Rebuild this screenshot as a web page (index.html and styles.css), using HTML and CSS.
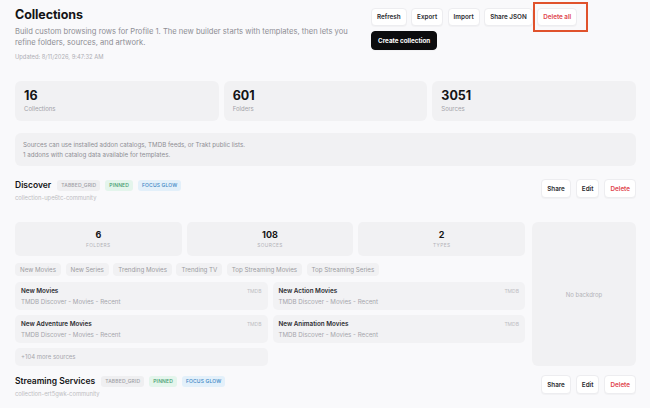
FILE: index.html
```html
<!DOCTYPE html>
<html lang="en">
<head>
<meta charset="utf-8">
<title>Collections</title>
<link rel="stylesheet" href="styles.css">
</head>
<body>
<main class="page">
  <header class="top">
    <div class="intro">
      <h1>Collections</h1>
      <p class="lede">Build custom browsing rows for Profile 1. The new builder starts with templates, then lets you refine folders, sources, and artwork.</p>
      <p class="stamp">Updated: 8/11/2026, 9:47:32 AM</p>
    </div>
    <div class="actions">
      <button class="btn">Refresh</button>
      <button class="btn">Export</button>
      <button class="btn">Import</button>
      <button class="btn">Share JSON</button>
      <span class="flag"><button class="btn danger">Delete all</button></span>
      <button class="btn primary">Create collection</button>
    </div>
  </header>

  <section class="totals">
    <div class="total"><strong>16</strong><span>Collections</span></div>
    <div class="total"><strong>601</strong><span>Folders</span></div>
    <div class="total"><strong>3051</strong><span>Sources</span></div>
  </section>

  <div class="note">
    <p>Sources can use installed addon catalogs, TMDB feeds, or Trakt public lists.</p>
    <p>1 addons with catalog data available for templates.</p>
  </div>

  <article class="coll">
    <div class="coll-head">
      <div>
        <div class="coll-title">
          <h2>Discover</h2>
          <span class="tag">TABBED_GRID</span>
          <span class="tag green">PINNED</span>
          <span class="tag blue">FOCUS GLOW</span>
        </div>
        <div class="slug">collection-upe6tc-community</div>
      </div>
      <div class="row-actions">
        <button class="btn sm">Share</button>
        <button class="btn sm">Edit</button>
        <button class="btn sm danger">Delete</button>
      </div>
    </div>

    <div class="coll-body">
      <div class="coll-main">
        <div class="counts">
          <div class="count"><b>6</b><span>Folders</span></div>
          <div class="count"><b>108</b><span>Sources</span></div>
          <div class="count"><b>2</b><span>Types</span></div>
        </div>
        <div class="chips">
          <span class="chip">New Movies</span>
          <span class="chip">New Series</span>
          <span class="chip">Trending Movies</span>
          <span class="chip">Trending TV</span>
          <span class="chip">Top Streaming Movies</span>
          <span class="chip">Top Streaming Series</span>
        </div>
        <div class="sources">
          <div class="src">
            <div class="src-top"><b>New Movies</b><i>TMDB</i></div>
            <div class="src-sub">TMDB Discover - Movies - Recent</div>
          </div>
          <div class="src">
            <div class="src-top"><b>New Action Movies</b><i>TMDB</i></div>
            <div class="src-sub">TMDB Discover - Movies - Recent</div>
          </div>
          <div class="src">
            <div class="src-top"><b>New Adventure Movies</b><i>TMDB</i></div>
            <div class="src-sub">TMDB Discover - Movies - Recent</div>
          </div>
          <div class="src">
            <div class="src-top"><b>New Animation Movies</b><i>TMDB</i></div>
            <div class="src-sub">TMDB Discover - Movies - Recent</div>
          </div>
          <div class="more">+104 more sources</div>
        </div>
      </div>
      <div class="backdrop">No backdrop</div>
    </div>
  </article>

  <article class="coll">
    <div class="coll-head">
      <div>
        <div class="coll-title">
          <h2>Streaming Services</h2>
          <span class="tag">TABBED_GRID</span>
          <span class="tag green">PINNED</span>
          <span class="tag blue">FOCUS GLOW</span>
        </div>
        <div class="slug">collection-ert5gwk-community</div>
      </div>
      <div class="row-actions">
        <button class="btn sm">Share</button>
        <button class="btn sm">Edit</button>
        <button class="btn sm danger">Delete</button>
      </div>
    </div>
  </article>
</main>
</body>
</html>
```

FILE: styles.css
```css
* { box-sizing: border-box; }

html, body {
  margin: 0;
  background: #f9f9fb;
  font-family: Inter, "Noto Sans", sans-serif;
  color: #141416;
  overflow: hidden;
}

.page {
  padding: 8px 14px 0 15px;
}

p { margin: 0; }

/* ---------- page header ---------- */
.top {
  display: flex;
  justify-content: space-between;
  align-items: flex-start;
}

.intro h1 {
  margin: 0;
  font-size: 12.5px;
  line-height: 14px;
  font-weight: 700;
  letter-spacing: -0.1px;
}

.lede {
  margin-top: 4px;
  width: 340px;
  font-size: 7.6px;
  line-height: 11px;
  color: #8e8e94;
}

.stamp {
  margin-top: 5px;
  font-size: 5.8px;
  line-height: 8px;
  color: #aeaeb4;
}

.actions {
  width: 265px;
  display: flex;
  flex-wrap: wrap;
  gap: 5px 4.5px;
}

.btn {
  font-family: inherit;
  height: 18px;
  padding: 0 5px;
  border: 1px solid #ededf0;
  border-radius: 4px;
  background: #fff;
  font-size: 6.3px;
  font-weight: 600;
  color: #2b2b30;
  box-shadow: 0 1px 1px rgba(0, 0, 0, 0.03);
  cursor: pointer;
}

.btn.danger { color: #e0444c; }

.btn.primary {
  height: 19px;
  padding: 0 6px;
  background: #0c0c0e;
  border-color: #0c0c0e;
  color: #fff;
  font-weight: 700;
  border-radius: 4px;
}

.flag {
  position: relative;
  display: inline-flex;
}

/* highlight frame around the destructive action */
.flag::after {
  content: "";
  position: absolute;
  left: -4px;
  right: -11px;
  top: -6px;
  bottom: -6px;
  border: 2.5px solid #e0522c;
  pointer-events: none;
}

/* ---------- totals ---------- */
.totals {
  margin-top: 20px;
  display: grid;
  grid-template-columns: repeat(3, 1fr);
  gap: 5px;
}

.total {
  height: 40px;
  padding: 8px 9px 0;
  background: #f1f1f3;
  border-radius: 6px;
}

.total strong {
  display: block;
  font-size: 12.5px;
  line-height: 14px;
  font-weight: 700;
}

.total span {
  display: block;
  margin-top: 2px;
  font-size: 6px;
  line-height: 8px;
  color: #a2a2a8;
}

.note {
  margin-top: 12px;
  height: 33px;
  padding: 7px 8px;
  background: #f1f1f3;
  border-radius: 6px;
  font-size: 6.2px;
  line-height: 10px;
  color: #8e8e94;
}

/* ---------- collection ---------- */
.coll { margin-top: 13px; }
.coll + .coll { margin-top: 9px; }

.coll-head {
  display: flex;
  justify-content: space-between;
  align-items: flex-start;
}

.coll-title {
  display: flex;
  align-items: center;
  gap: 5px;
  margin-top: 1px;
}

.coll-title h2 {
  margin: 0 1px 0 0;
  font-size: 8.5px;
  line-height: 11px;
  font-weight: 600;
}

.tag {
  height: 11px;
  padding: 0 4px;
  line-height: 11px;
  border-radius: 3px;
  font-size: 5px;
  font-weight: 500;
  letter-spacing: 0.15px;
  background: #efeff1;
  color: #a0a0a6;
}

.tag.green { background: #e4f5ec; color: #3c9a6b; }
.tag.blue { background: #e3f0fa; color: #3d86c4; }

.slug {
  margin-top: 3px;
  font-size: 5.8px;
  line-height: 8px;
  color: #bdbdc2;
}

.row-actions {
  display: flex;
  gap: 5px;
}

.btn.sm {
  height: 19px;
  padding: 0 5px;
}

.coll-body {
  margin-top: 20px;
  display: flex;
  gap: 7px;
}

.coll-main { flex: 1; }

.counts {
  display: grid;
  grid-template-columns: repeat(3, 1fr);
  gap: 5px;
}

.count {
  height: 34px;
  padding-top: 8px;
  background: #f1f1f3;
  border-radius: 5px;
  text-align: center;
}

.count b {
  display: block;
  font-size: 9px;
  line-height: 10px;
  font-weight: 700;
}

.count span {
  display: block;
  margin-top: 2px;
  font-size: 4.8px;
  line-height: 7px;
  letter-spacing: 0.4px;
  text-transform: uppercase;
  color: #b2b2b7;
}

.chips {
  margin-top: 7px;
  display: flex;
  gap: 4.5px;
}

.chip {
  height: 13px;
  padding: 0 5px;
  line-height: 13px;
  border-radius: 4px;
  background: #f1f1f3;
  font-size: 6.2px;
  color: #9c9ca2;
}

.sources {
  margin-top: 6px;
  display: grid;
  grid-template-columns: 1fr 1fr;
  gap: 5px;
}

.src {
  height: 28px;
  padding: 5px 6px 0;
  background: #f2f2f4;
  border-radius: 5px;
}

.src-top {
  display: flex;
  justify-content: space-between;
  align-items: baseline;
}

.src-top b {
  font-size: 6.3px;
  line-height: 8px;
  font-weight: 600;
  color: #2c2c31;
}

.src-top i {
  font-style: normal;
  font-size: 5px;
  color: #bdbdc2;
}

.src-sub {
  margin-top: 3px;
  font-size: 6.2px;
  line-height: 8px;
  color: #a6a6ac;
}

.more {
  height: 18px;
  padding: 0 6px;
  line-height: 18px;
  background: #f2f2f4;
  border-radius: 5px;
  font-size: 6px;
  color: #a6a6ac;
}

.backdrop {
  width: 104px;
  background: #f1f1f3;
  border-radius: 6px;
  display: flex;
  align-items: center;
  justify-content: center;
  font-size: 6px;
  color: #b4b4b9;
}
```
